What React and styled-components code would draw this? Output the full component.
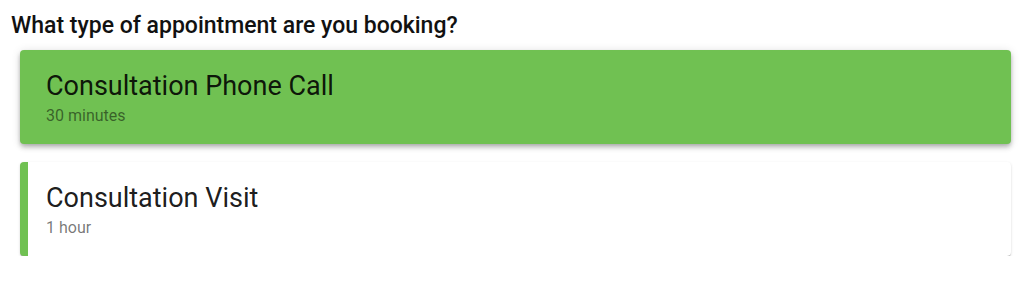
import React from 'react';
import styled, { createGlobalStyle } from 'styled-components';

const GlobalStyle = createGlobalStyle`
  body {
    margin: 0;
    background: #fff;
    font-family: Roboto, 'Liberation Sans', sans-serif;
  }
`;

const Wrapper = styled.section`
  padding: 12px 13px 0 11px;
`;

const Heading = styled.h2`
  margin: 0 0 11px;
  font-size: 23px;
  font-weight: 500;
  line-height: normal;
  color: #111;
`;

const List = styled.div`
  display: flex;
  flex-direction: column;
  gap: 18px;
  padding-left: 9px;
`;

const Card = styled.div`
  display: flex;
  flex-direction: column;
  gap: 4px;
  padding: 20px 18px 19px;
  border-left: 8px solid #70c152;
  border-radius: 4px;
  background: ${({ selected }) => (selected ? '#70c152' : '#fff')};
  box-shadow: ${({ selected }) =>
    selected
      ? '0 2px 4px -1px rgba(0,0,0,0.2), 0 4px 5px 0 rgba(0,0,0,0.14), 0 1px 10px 0 rgba(0,0,0,0.12)'
      : '0 2px 1px -1px rgba(0,0,0,0.2), 0 1px 1px 0 rgba(0,0,0,0.14), 0 1px 3px 0 rgba(0,0,0,0.12)'};
  cursor: pointer;
`;

const Title = styled.div`
  font-size: 27px;
  line-height: normal;
  color: rgba(0, 0, 0, 0.9);
`;

const Duration = styled.div`
  font-size: 16px;
  line-height: normal;
  color: ${({ selected }) => (selected ? 'rgba(0,0,0,0.5)' : 'rgba(0,0,0,0.54)')};
`;

const types = [
  { name: 'Consultation Phone Call', duration: '30 minutes' },
  { name: 'Consultation Visit', duration: '1 hour' },
];

const App = () => {
  const selected = 0;
  return (
    <>
      <GlobalStyle />
      <Wrapper>
        <Heading>What type of appointment are you booking?</Heading>
        <List>
          {types.map((t, i) => (
            <Card key={t.name} selected={i === selected}>
              <Title>{t.name}</Title>
              <Duration selected={i === selected}>{t.duration}</Duration>
            </Card>
          ))}
        </List>
      </Wrapper>
    </>
  );
};

export default App;
